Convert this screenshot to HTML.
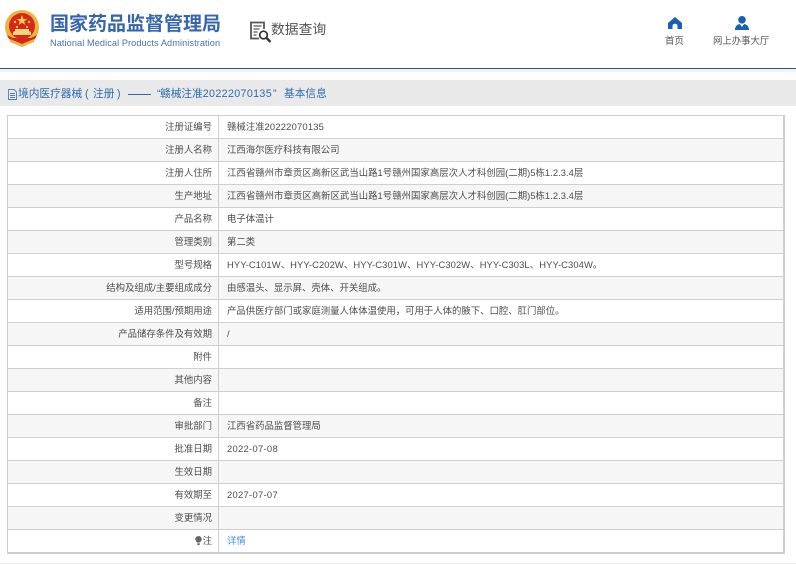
<!DOCTYPE html>
<html lang="zh"><head><meta charset="utf-8"><title>数据查询</title>
<style>
html,body{margin:0;padding:0;background:#fff}
body{width:796px;height:565px;position:relative;overflow:hidden;font-family:"Liberation Sans","Noto Sans CJK SC",sans-serif;color:#555}
.a{position:absolute;white-space:nowrap}
.h{top:87px;font-size:10.7px;line-height:15px;color:#2c6cb0}
table{position:absolute;left:7px;top:115px;width:778px;height:438px;border-collapse:collapse;table-layout:fixed;font-size:9.4px;color:#4c4c4c;border:1px solid #cfcfcf;border-bottom-width:2px;border-right-width:2px}
td{height:23px;padding:0 0 1px;box-sizing:border-box;border:1px solid #cfcfcf;white-space:nowrap;line-height:13px}
td:first-child{width:211px;text-align:right;padding-right:6px}
td:last-child{padding-left:8px}
tr:nth-child(even) td{background:#f6f6f6}
.n{letter-spacing:.3px}
</style></head><body>
<svg class="a" style="left:4px;top:10px" width="36" height="38" viewBox="0 0 36 38">
<circle cx="18" cy="17" r="17" fill="#e6b63e"/><circle cx="18" cy="16" r="13" fill="#d8261c"/>
<polygon points="18,5 19.4,9 23.5,9 20.2,11.4 21.4,15 18,12.8 14.6,15 15.8,11.4 12.5,9 16.6,9" fill="#f4cf4a"/>
<circle cx="11" cy="12" r="1.2" fill="#f4cf4a"/><circle cx="25" cy="12" r="1.2" fill="#f4cf4a"/><circle cx="13" cy="17" r="1.1" fill="#f4cf4a"/><circle cx="23" cy="17" r="1.1" fill="#f4cf4a"/>
<path d="M9 25h18v-3l-2-1v-2H11v2l-2 1z" fill="#f0d480"/>
<path d="M3 25c2 6 7 8 15 12 8-4 13-6 15-12l-6 3H9z" fill="#d8261c"/>
<path d="M6 29l12 5 12-5v3l-12 5-12-5z" fill="#e6b63e"/>
</svg>
<div class="a" style="left:50px;top:14px;font-size:19px;line-height:22px;font-weight:bold;color:#3565ac">国家药品监督管理局</div>
<div class="a" style="left:50px;top:37px;font-size:9.2px;line-height:12px;color:#4a72b0;letter-spacing:.08px">National Medical Products Administration</div>

<svg class="a" style="left:249px;top:21px" width="23" height="23" viewBox="0 0 23 23" fill="none" stroke="#555">
<path d="M10 17.500H2V1.500h13V8" stroke-width="1.800"/>
<path d="M4.500 5h8M4.500 8h6M4.500 11h4M4.500 14h3" stroke-width="1.300"/>
<circle cx="14.500" cy="14" r="3.800" stroke-width="1.700" stroke="#333"/>
<path d="M17.500 17l4 4" stroke-width="2.400" stroke="#333"/>
</svg>
<div class="a" style="left:271px;top:20px;font-size:13.8px;line-height:20px;color:#555">数据查询</div>

<svg class="a" style="left:668px;top:17px" width="14" height="12" viewBox="0 0 14 12"><path d="M7 0L0 6V12H4.500V9C4.500 7.500 5.500 6.800 7 6.800S9.500 7.500 9.500 9V12H14V6z" fill="#1a5fb4"/></svg>
<div class="a" style="left:665px;top:35px;font-size:9.4px;line-height:12px;color:#555">首页</div>
<svg class="a" style="left:735px;top:16px" width="14" height="14" viewBox="0 0 14 14"><circle cx="7" cy="3.800" r="3.800" fill="#1a5fb4"/><path d="M0 14C0 10.500 2 8.500 4.800 8L7 11L9.200 8C12 8.500 14 10.500 14 14z" fill="#1a5fb4"/></svg>
<div class="a" style="left:713px;top:35px;font-size:9.4px;line-height:12px;color:#555">网上办事大厅</div>

<div class="a" style="left:0;top:68px;width:796px;height:1px;background:#1f5b92"></div>
<div class="a" style="left:0;top:69px;width:796px;height:3px;background:#f1f3f5"></div>

<div class="a" style="left:0;top:80px;width:796px;height:26px;background:#e9e9e9"></div>
<svg class="a" style="left:8px;top:89px" width="9" height="11" viewBox="0 0 9 11" fill="none" stroke="#4a7fb8"><path d="M.5.500h5.500l2.500 2.500v7.500h-8zM2 4.500h5M2 6.500h5M2 8.500h5" stroke-width=".9"/></svg>
<div class="a h" style="left:18px">境内医疗器械</div>
<div class="a h" style="left:85px">(</div>
<div class="a h" style="left:93px">注册</div>
<div class="a h" style="left:117px">)</div>
<div class="a h" style="left:128px;width:23px;height:1px;top:94px;background:#2c6cb0"></div>
<div class="a h" style="left:157px">“</div>
<div class="a h" style="left:160px">赣械注准<span style="letter-spacing:.35px">20222070135</span></div>
<div class="a h" style="left:273px">”</div>
<div class="a h" style="left:284px">基本信息</div>

<table>
<tr><td>注册证编号</td><td>赣械注准<span style="letter-spacing:.2px">20222070135</span></td></tr>
<tr><td>注册人名称</td><td>江西海尔医疗科技有限公司</td></tr>
<tr><td>注册人住所</td><td style="letter-spacing:.035px">江西省赣州市章贡区高新区武当山路1号赣州国家高层次人才科创园(二期)5栋1.2.3.4层</td></tr>
<tr><td>生产地址</td><td style="letter-spacing:.035px">江西省赣州市章贡区高新区武当山路1号赣州国家高层次人才科创园(二期)5栋1.2.3.4层</td></tr>
<tr><td>产品名称</td><td>电子体温计</td></tr>
<tr><td>管理类别</td><td>第二类</td></tr>
<tr><td>型号规格</td><td style="letter-spacing:.1px">HYY-C101W、HYY-C202W、HYY-C301W、HYY-C302W、HYY-C303L、HYY-C304W。</td></tr>
<tr><td>结构及组成/主要组成成分</td><td>由感温头、显示屏、壳体、开关组成。</td></tr>
<tr><td>适用范围/预期用途</td><td>产品供医疗部门或家庭测量人体体温使用，可用于人体的腋下、口腔、肛门部位。</td></tr>
<tr><td>产品储存条件及有效期</td><td>/</td></tr>
<tr><td>附件</td><td></td></tr>
<tr><td>其他内容</td><td></td></tr>
<tr><td>备注</td><td></td></tr>
<tr><td>审批部门</td><td>江西省药品监督管理局</td></tr>
<tr><td>批准日期</td><td class="n">2022-07-08</td></tr>
<tr><td>生效日期</td><td></td></tr>
<tr><td>有效期至</td><td class="n">2027-07-07</td></tr>
<tr><td>变更情况</td><td></td></tr>
<tr><td><svg width="7" height="9" viewBox="0 0 7 9" style="vertical-align:-1px;margin-right:1px"><path d="M3.500 0a3.200 3.200 0 0 1 3.200 3.200c0 1.500-1.200 2.300-1.700 3.300H2C1.500 5.500.3 4.700.3 3.200A3.200 3.200 0 0 1 3.500 0zM2.300 7.200h2.400V9H2.300z" fill="#666"/></svg>注</td><td style="color:#3a8ee6">详情</td></tr>
</table>
<div class="a" style="left:0;top:563px;width:796px;height:1px;background:#ececec"></div>
</body></html>
